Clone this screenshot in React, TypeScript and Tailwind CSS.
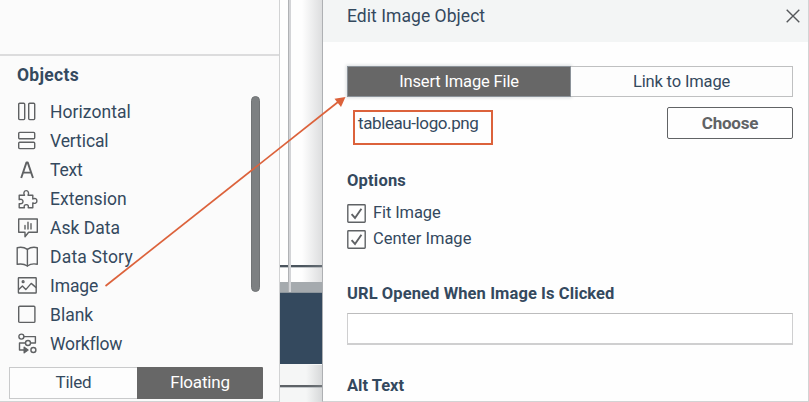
import type { ReactNode } from "react";

function Icon({ children }: { children: ReactNode }) {
  return (
    <svg
      width="22"
      height="22"
      viewBox="0 0 22 22"
      fill="none"
      stroke="#5f6163"
      strokeWidth="1.4"
      strokeLinejoin="round"
      strokeLinecap="round"
      className="shrink-0"
    >
      {children}
    </svg>
  );
}

const items: { label: string; tracking: string; icon: ReactNode }[] = [
  {
    label: "Horizontal",
    tracking: "tracking-[0.05px]",
    icon: (
      <>
        <rect x="2.7" y="2.2" width="6" height="16.4" rx="1" />
        <rect x="12.7" y="2.2" width="6" height="16.4" rx="1" />
      </>
    ),
  },
  {
    label: "Vertical",
    tracking: "tracking-[-0.1px]",
    icon: (
      <>
        <rect x="2.7" y="2.4" width="16" height="6.4" rx="1" />
        <rect x="2.7" y="12.2" width="16" height="6.4" rx="1" />
      </>
    ),
  },
  {
    label: "Text",
    tracking: "tracking-[-0.2px]",
    icon: <path d="M5.2 19 10.5 3.4h1.2L17 19M7.2 13.6h8" strokeWidth="1.9" strokeLinecap="butt" />,
  },
  {
    label: "Extension",
    tracking: "tracking-[0.05px]",
    icon: (
      <path d="M3.2 7.2H8.5C7.2 5.2 8 2.6 10.2 2.6S13.2 5.2 12 7.2H16.8V11C18.8 9.8 20.9 10.8 20.9 12.9S18.8 16 16.8 14.9V19.8H12.2C12.8 17.6 12 16.6 10.3 16.6S7.7 17.6 8.4 19.8H3.2V15.6C5.5 16.2 7 15.2 7 13.4S5.4 10.8 3.2 11.7Z" />
    ),
  },
  {
    label: "Ask Data",
    tracking: "tracking-[0px]",
    icon: (
      <>
        <path d="M2.7 2H21.3V15.2H12.6L9 19.8V15.2H2.7Z" />
        <path d="M9 8.4v3.6M12 5.2v6.8M15 6.6v5.4" />
      </>
    ),
  },
  {
    label: "Data Story",
    tracking: "tracking-[0.2px]",
    icon: (
      <>
        <path d="M1.2 1.7C5 .9 8.4 1.3 11.4 3.4 14.3 1.3 17.7.9 21.3 1.7V18.3C17.8 17.5 14.3 17.9 11.4 20 8.4 17.9 5 17.5 1.2 18.3Z" />
        <path d="M11.4 3.4V20" />
      </>
    ),
  },
  {
    label: "Image",
    tracking: "tracking-[-0.1px]",
    icon: (
      <>
        <rect x="2.4" y="2.8" width="17.8" height="15.2" rx="0.5" />
        <path d="M2.7 14.4 6.4 11 9.8 14.6 15.2 8.4 19.9 12.4" />
        <circle cx="7.1" cy="6.7" r="0.9" />
      </>
    ),
  },
  {
    label: "Blank",
    tracking: "tracking-[0px]",
    icon: <rect x="2.7" y="2.2" width="16.2" height="16.2" rx="1" />,
  },
  {
    label: "Workflow",
    tracking: "tracking-[-0.15px]",
    icon: (
      <>
        <circle cx="5.4" cy="3.6" r="2.5" />
        <circle cx="12" cy="10" r="2.5" />
        <circle cx="17.4" cy="17" r="2.5" />
        <path d="M8.2 3.6H19.4V10H14.7M9.3 10H3.5V17H8" />
        <path d="M8.2 14.2 12 17 8.2 19.8Z" fill="#5f6163" />
      </>
    ),
  },
];

function Sidebar() {
  return (
    <aside className="relative flex h-[402px] w-[280px] shrink-0 flex-col border-r border-b border-[#d2d3d4] bg-[#fbfbfb]">
      <div className="h-[56px] shrink-0 border-b-2 border-[#dcdcdd]" />
      <h2 className="mt-[8px] ml-[17px] h-[24px] text-[17.5px] leading-[23px] font-bold tracking-[0.3px]">
        Objects
      </h2>
      <ul className="mt-[10px] flex flex-col">
        {items.map((item) => (
          <li key={item.label} className="flex h-[28.9px] items-center pl-[16px]">
            <Icon>{item.icon}</Icon>
            <span className={`ml-[12px] text-[17.5px] leading-[28px] ${item.tracking}`}>{item.label}</span>
          </li>
        ))}
      </ul>
      <div className="mt-[9px] ml-[9px] flex h-[32px] w-[254px] text-[17px] tracking-[-0.2px]">
        <div className="flex w-[128px] items-center justify-center border border-r-0 border-[#c9cacb] bg-[#fdfdfd]">
          Tiled
        </div>
        <div className="flex w-[126px] items-center justify-center rounded-r-[1px] bg-[#676767] text-white">
          Floating
        </div>
      </div>
      <div className="absolute top-[96px] left-[251px] h-[196px] w-[9px] rounded-full border border-[#717476] bg-[#7d8082]" />
    </aside>
  );
}

function Workspace() {
  return (
    <div className="relative flex h-[402px] w-[42px] shrink-0 flex-col bg-[#fefefe]">
      <div className="h-[265px]" />
      <div className="h-[3px] border-b border-[#c3c7ca] bg-[#4b555e]" />
      <div className="h-[14px]" />
      <div className="h-[11px] border-b border-[#8d969d] bg-[#a5aaae]" />
      <div className="h-[71px] bg-[#34495e]" />
      <div className="h-[21px] bg-[#f5f6f6]" />
      <div className="h-[3px] border-b border-[#c3c7ca] bg-[#5d6267]" />
      <div className="h-[14px] bg-[#f5f6f6]" />
      <div className="absolute top-0 left-[8px] h-[292px] w-[3px] border-l border-[#b0b2b5] bg-[#d3d4d7]" />
      <div className="absolute top-0 right-0 h-[282px] w-[20px] bg-gradient-to-r from-transparent to-[#9a9da055]" />
      <div className="absolute right-0 bottom-0 h-[37px] w-[16px] bg-gradient-to-r from-transparent to-[#9a9da055]" />
    </div>
  );
}

function CheckRow({ label, tracking }: { label: string; tracking: string }) {
  return (
    <label className={`flex h-[26.5px] items-center gap-[7px] text-[16.5px] ${tracking}`}>
      <svg width="19" height="19" viewBox="0 0 19 19" fill="none" stroke="#5f6265">
        <rect x="0.8" y="0.8" width="17.4" height="17.4" rx="0.7" strokeWidth="1.4" />
        <path d="M4.6 10.2 8 14 14.4 4.7" strokeWidth="1.9" />
      </svg>
      <span>{label}</span>
    </label>
  );
}

function Dialog() {
  return (
    <section className="flex h-[402px] w-[487px] shrink-0 flex-col border-r border-b border-l border-[#d3d3d4] border-l-[#aeb0b3] bg-[#fefefe]">
      <header className="flex h-[42px] shrink-0 items-center justify-between bg-[#f3f5f5] pr-[8px] pb-[11px] pl-[24px]">
        <h1 className="text-[17.5px] leading-[24px] tracking-[0.05px]">Edit Image Object</h1>
        <svg width="14" height="14" viewBox="0 0 14 14" stroke="#55585b" strokeWidth="1.4" fill="none">
          <path d="M.7.7 13.3 13.3M13.3.7.7 13.3" />
        </svg>
      </header>
      <div className="flex w-[470px] flex-col pl-[24px]">
        <div className="mt-[24px] flex h-[31px] text-[16.5px] tracking-[-0.15px]">
          <div className="flex w-[224px] shrink-0 items-center justify-center border border-[#8b9299] bg-[#676767] pt-[2px] text-white shadow-[0_0_3px_1px_#dcdfe1]">
            Insert Image File
          </div>
          <div className="flex flex-1 items-center justify-center border border-l-0 border-[#bfc0c1] bg-[#fdfdfd] pt-[2px]">
            Link to Image
          </div>
        </div>
        <div className="mt-[10px] flex h-[38px] items-start justify-between pl-[6px]">
          <div className="mt-[3px] flex h-[35px] w-[140px] border-2 border-[#dc623b] pl-[3px] text-[17px] leading-[23px] tracking-[-0.4px]">
            tableau-logo.png
          </div>
          <button className="flex h-[32px] w-[126px] items-center justify-center rounded-[2px] border-[1.5px] border-[#616365] pt-[2px] text-[17px] font-bold tracking-[-0.2px] text-[#616365]">
            Choose
          </button>
        </div>
        <h3 className="mt-[23px] h-[24px] text-[16.5px] leading-[25px] font-bold tracking-[0.2px]">Options</h3>
        <div className="mt-[8px] flex flex-col">
          <CheckRow label="Fit Image" tracking="tracking-[-0.1px]" />
          <CheckRow label="Center Image" tracking="tracking-[0px]" />
        </div>
        <h3 className="mt-[28px] h-[24px] text-[16.5px] leading-[25px] font-bold tracking-[0.1px] whitespace-nowrap">
          URL Opened When Image Is Clicked
        </h3>
        <div className="mt-[8px] h-[32px] border border-b-2 border-[#cfcfd0] border-t-[#bcbcbd] bg-white" />
        <h3 className="mt-[28px] h-[24px] text-[16.5px] leading-[25px] font-bold">Alt Text</h3>
      </div>
    </section>
  );
}

export default function App() {
  return (
    <main className="relative flex h-[402px] w-[809px] overflow-hidden bg-white font-[Roboto,'Liberation_Sans',sans-serif] text-[#34495e]">
      <Sidebar />
      <Workspace />
      <Dialog />
      <svg className="pointer-events-none absolute inset-0" width="809" height="402" viewBox="0 0 809 402">
        <path d="M105.5 286 338 102" stroke="#dc623b" strokeWidth="1.7" />
        <path d="M345.5 97 341 107 334.5 98.7Z" fill="#dc623b" />
      </svg>
    </main>
  );
}
